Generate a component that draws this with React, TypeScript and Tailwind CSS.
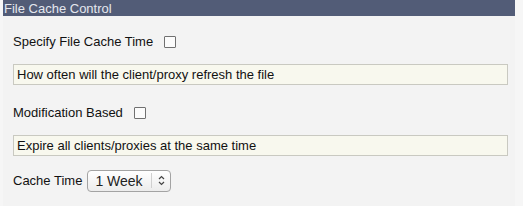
import { useState } from 'react';

const FONT = { fontFamily: '"Liberation Sans", Arial, sans-serif' };

function Check({ checked, onChange }: { checked: boolean; onChange: (v: boolean) => void }) {
  return (
    <input
      type="checkbox"
      checked={checked}
      onChange={(e) => onChange(e.target.checked)}
      className="ml-[11px] h-[12px] w-[12px] appearance-none rounded-[1px] border border-[#707070] bg-[#fbfbfb] checked:bg-[#4a74c9]"
    />
  );
}

function Hint({ children }: { children: React.ReactNode }) {
  return (
    <div className="flex h-[21px] items-center border border-[#c9c9c1] bg-[#f8f8ee] pl-[3px] text-[13px] text-[#111]">
      {children}
    </div>
  );
}

export default function App() {
  const [cacheTime, setCacheTime] = useState(false);
  const [modBased, setModBased] = useState(false);
  const [period, setPeriod] = useState('1 Week');

  return (
    <div className="h-[206px] w-[523px] bg-[#f6f6f6] pl-[3px]" style={FONT}>
      <div className="h-[206px] w-[512px] bg-[#f3f3f3]">
        <div className="flex h-[16px] items-center bg-[#525c77] pl-[1px] text-[13px] leading-none text-[#e4e7ee]">
          File Cache Control
        </div>

        <div className="pl-[10px] pr-[7px] pt-[18px]">
          <div className="flex h-[16px] items-center text-[13px] text-[#111]">
            Specify File Cache Time
            <Check checked={cacheTime} onChange={setCacheTime} />
          </div>

          <div className="mt-[14px]">
            <Hint>How often will the client/proxy refresh the file</Hint>
          </div>

          <div className="mt-[20px] flex h-[16px] items-center text-[13px] text-[#111]">
            Modification Based
            <Check checked={modBased} onChange={setModBased} />
          </div>

          <div className="mt-[14px]">
            <Hint>Expire all clients/proxies at the same time</Hint>
          </div>

          <div className="mt-[14px] flex h-[22px] items-center text-[13px] text-[#111]">
            Cache Time
            <div className="relative ml-[5px]">
              <select
                value={period}
                onChange={(e) => setPeriod(e.target.value)}
                className="h-[22px] w-[84px] appearance-none rounded-[4px] border border-[#a3a3a3] bg-gradient-to-b from-[#ffffff] to-[#ececec] pl-[7px] text-[14px] text-[#222] outline-none"
                style={FONT}
              >
                <option>1 Day</option>
                <option>1 Week</option>
                <option>1 Month</option>
              </select>
              <div className="pointer-events-none absolute right-[19px] top-[3px] h-[15px] w-px bg-[#d0d0d0]" />
              <svg
                className="pointer-events-none absolute right-[6px] top-[5px]"
                width="7"
                height="11"
                viewBox="0 0 7 11"
                fill="none"
                stroke="#444"
                strokeWidth="1.2"
              >
                <path d="M1 4 L3.5 1.5 L6 4" />
                <path d="M1 7 L3.5 9.5 L6 7" />
              </svg>
            </div>
          </div>
        </div>
      </div>
    </div>
  );
}
